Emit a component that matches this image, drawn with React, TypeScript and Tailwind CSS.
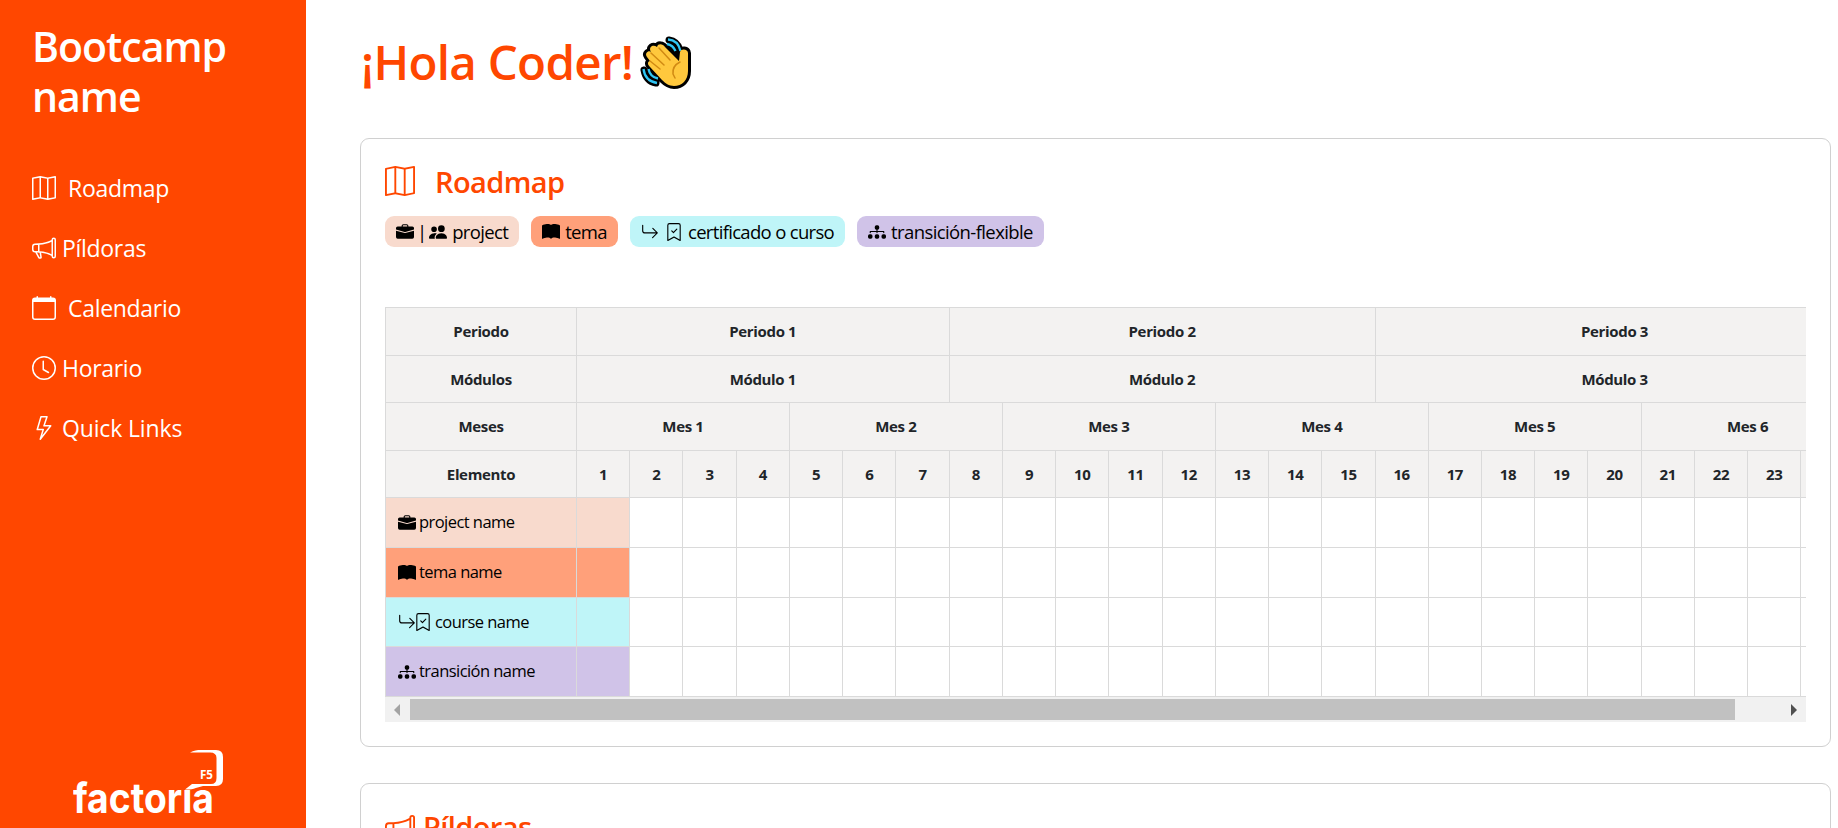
import type { ReactNode } from "react";
import {
  BsArrowReturnRight,
  BsBookFill,
  BsBookmarkCheck,
  BsBriefcaseFill,
  BsCalendar,
  BsClock,
  BsDiagram3Fill,
  BsLightning,
  BsMap,
  BsMegaphone,
  BsPeopleFill,
} from "react-icons/bs";

const links = [
  { label: "Roadmap", icon: <BsMap />, gap: "ml-[12px] tracking-[-0.3px]" },
  { label: "Píldoras", icon: <BsMegaphone />, gap: "ml-[6px] tracking-[-0.3px]" },
  { label: "Calendario", icon: <BsCalendar />, gap: "ml-[12px] tracking-[-0.3px]" },
  { label: "Horario", icon: <BsClock />, gap: "ml-[6px] tracking-[-0.3px]" },
  { label: "Quick Links", icon: <BsLightning />, gap: "ml-[6px] tracking-[-0.15px]" },
];

function Logo() {
  return (
    <svg width="154" height="74" viewBox="0 0 154 74" fill="#fff" className="block">
      <text x="0" y="63" fontFamily="Inter, sans-serif" fontWeight="700" fontSize="41" textLength="141" lengthAdjust="spacingAndGlyphs">
        factorıa
      </text>
      <path d="M117 2.5 C121 0.5 124 0 128 0 H143 Q150 0 150 7 V29 Q150 36 143 36 H130 C125 37 120 40 112 39.500 L119 34 H138 Q143.500 34 143.500 28 V8 Q143.500 2.500 137 2.500 Z" />
      <text x="127" y="29" fontFamily="Open Sans, sans-serif" fontWeight="700" fontSize="12.500" textLength="13" lengthAdjust="spacingAndGlyphs">
        F5
      </text>
    </svg>
  );
}

function WavingHand() {
  const hand =
    "M7 22 C4 18 9 15 11 17 C8 12 13 9 17 12 C18 8 23 9 25 12 L39 26 L40 17 C41 13 48 14 48 18 V36 C48 45 42 51 34 51 C29 51 25 48 22 45 L10 32 C6 28 9 26 10 26 Z";
  return (
    <svg width="52" height="56" viewBox="0 0 52 56" fill="none" strokeLinecap="round" strokeLinejoin="round">
      <g stroke="#000" strokeWidth="7">
        <path d="M29 5 Q37 6 40 15 M30 11 Q33 12 36 17" />
        <path d="M4 35 Q6 46 16 48 M10 36 Q11 42 17 44" />
      </g>
      <path d={hand} fill="#000" stroke="#000" strokeWidth="6" />
      <g stroke="#30c5f4" strokeWidth="2.300" strokeLinecap="butt">
        <path d="M28 4.500 Q38 5 40.500 16 M27 9 Q33 10 35.500 16" />
        <path d="M3.500 34 Q5 46 17 48 M8.500 34 Q10 42 18 43.500" />
      </g>
      <path d={hand} fill="#ffc83d" />
      <path d="M19 13 L30 25 M11 18 L24 30 M10 26 L20 34 M40 27 Q32 31 33 39 L35 43" stroke="#d18a13" strokeWidth="1.500" />
    </svg>
  );
}

function Chip({ color, children }: { color: string; children: ReactNode }) {
  return (
    <span className={`flex h-[31px] items-center rounded-[9px] px-[11px] text-[18.500px] text-black ${color}`}>
      {children}
    </span>
  );
}

const spanClass: Record<number, string> = {
  1: "col-span-1",
  4: "col-span-4",
  7: "col-span-7",
  8: "col-span-8",
  9: "col-span-9",
};

function HeadCell({ children, span = 1, first = false }: { children: ReactNode; span?: number; first?: boolean }) {
  return (
    <div
      className={`flex items-center justify-center border-r border-b border-[#dadada] bg-[#f3f2f1] text-[15px] font-bold tracking-[-0.35px] text-[#212529] ${spanClass[span]} ${first ? "border-l" : ""}`}
    >
      {children}
    </div>
  );
}

const rows = [
  { name: "project name", color: "bg-[#f8dacd]", icon: <BsBriefcaseFill size={18} />, gap: "ml-[3px]" },
  { name: "tema name", color: "bg-[#ffa07a]", icon: <BsBookFill size={18} />, gap: "ml-[3px]" },
  {
    name: "course name",
    color: "bg-[#bff5f8]",
    icon: (
      <>
        <BsArrowReturnRight size={18} />
        <BsBookmarkCheck size={18} className="-ml-[2px]" />
      </>
    ),
    gap: "ml-[3px]",
  },
  { name: "transición name", color: "bg-[#d0c3e8]", icon: <BsDiagram3Fill size={18} />, gap: "ml-[3px]" },
];

const weeks = Array.from({ length: 24 }, (_, i) => i + 1);

function Timeline() {
  return (
    <div className="overflow-hidden">
      <div className="grid w-[1470px] grid-cols-[192px_repeat(24,53.24px)] grid-rows-[48px_47px_48px_47px_50px_50px_49px_50px] border-t border-[#dadada]">
        <HeadCell first>Periodo</HeadCell>
        <HeadCell span={7}>Periodo 1</HeadCell>
        <HeadCell span={8}>Periodo 2</HeadCell>
        <HeadCell span={9}>Periodo 3</HeadCell>
        <HeadCell first>Módulos</HeadCell>
        <HeadCell span={7}>Módulo 1</HeadCell>
        <HeadCell span={8}>Módulo 2</HeadCell>
        <HeadCell span={9}>Módulo 3</HeadCell>
        <HeadCell first>Meses</HeadCell>
        {[1, 2, 3, 4, 5, 6].map((m) => (
          <HeadCell key={m} span={4}>
            Mes {m}
          </HeadCell>
        ))}
        <HeadCell first>Elemento</HeadCell>
        {weeks.map((w) => (
          <HeadCell key={w}>{w}</HeadCell>
        ))}
        {rows.map((row) => (
          <div key={row.name} className="contents">
            <div className={`flex items-center border-r border-b border-l border-[#dadada] pl-[12px] text-black ${row.color}`}>
              {row.icon}
              <span className={`text-[16.500px] tracking-[-0.55px] ${row.gap}`}>{row.name}</span>
            </div>
            {weeks.map((w) => (
              <div key={w} className={`border-r border-b border-[#dadada] ${w === 1 ? row.color : "bg-white"}`} />
            ))}
          </div>
        ))}
      </div>
      <div className="flex h-[25px] items-center bg-[#f1f1f1] pr-[9px] pl-[9px]">
        <svg width="6" height="12" viewBox="0 0 6 12" fill="#a3a3a3">
          <path d="M6 0v12L0 6z" />
        </svg>
        <div className="ml-[10px] h-[21px] w-[1325px] bg-[#c1c1c1]" />
        <svg width="6" height="12" viewBox="0 0 6 12" fill="#505050" className="ml-auto">
          <path d="M0 0v12l6-6z" />
        </svg>
      </div>
    </div>
  );
}

export default function App() {
  return (
    <div className="flex h-[828px] w-[1838px] overflow-hidden bg-white font-['Open_Sans',sans-serif]">
      <aside className="flex w-[306px] shrink-0 flex-col bg-[#ff4700] text-white">
        <h1 className="mt-[21px] ml-[32px] text-[41px] leading-[50px] font-semibold tracking-[-1px]">
          Bootcamp
          <br />
          name
        </h1>
        <nav className="mt-[37px] ml-[32px]">
          {links.map((link) => (
            <a key={link.label} className="flex h-[60px] items-center text-[24px]">
              {link.icon}
              <span className={`text-[23px] leading-[30px] ${link.gap}`}>{link.label}</span>
            </a>
          ))}
        </nav>
        <div className="mt-auto mb-[4px] ml-[73px]">
          <Logo />
        </div>
      </aside>
      <main className="flex flex-col pl-[54px]">
        <header className="flex h-[138px] shrink-0 items-start">
          <h2 className="mt-[29px] ml-[1px] w-[279px] text-[47.500px] leading-[66px] font-semibold tracking-[-0.7px] whitespace-nowrap text-[#ff4700]">
            ¡Hola Coder!
          </h2>
          <div className="mt-[35px]">
            <WavingHand />
          </div>
        </header>
        <section className="h-[609px] w-[1471px] shrink-0 rounded-[9px] border border-[#d0d0d0] px-[24px] pt-[24px]">
          <div className="flex h-[40px] items-center text-[#ff4700]">
            <BsMap size={30} className="-mt-[4px]" />
            <h3 className="-mt-[2px] ml-[20px] text-[29px] font-semibold tracking-[-0.6px]">Roadmap</h3>
          </div>
          <div className="mt-[13px] flex gap-[12px]">
            <Chip color="bg-[#f8dacd]">
              <BsBriefcaseFill size={18} />
              <span className="mr-[2px] ml-[3px]">|</span>
              <BsPeopleFill size={18} />
              <span className="ml-[5px] tracking-[-0.65px]">project</span>
            </Chip>
            <Chip color="bg-[#ffa07a]">
              <BsBookFill size={18} />
              <span className="ml-[5px] tracking-[-0.65px]">tema</span>
            </Chip>
            <Chip color="bg-[#bff5f8]">
              <BsArrowReturnRight size={18} />
              <BsBookmarkCheck size={18} className="ml-[6px]" />
              <span className="ml-[5px] tracking-[-0.68px]">certificado o curso</span>
            </Chip>
            <Chip color="bg-[#d0c3e8]">
              <BsDiagram3Fill size={18} />
              <span className="ml-[5px] tracking-[-0.6px]">transición-flexible</span>
            </Chip>
          </div>
          <div className="mt-[60px]">
            <Timeline />
          </div>
        </section>
        <section className="mt-[36px] h-[200px] w-[1471px] shrink-0 rounded-[9px] border border-[#d0d0d0] px-[24px] pt-[24px]">
          <div className="flex h-[40px] items-center text-[#ff4700]">
            <BsMegaphone size={30} />
            <h3 className="-mt-[2px] ml-[8px] text-[29px] font-semibold tracking-[-0.6px]">Píldoras</h3>
          </div>
        </section>
      </main>
    </div>
  );
}
